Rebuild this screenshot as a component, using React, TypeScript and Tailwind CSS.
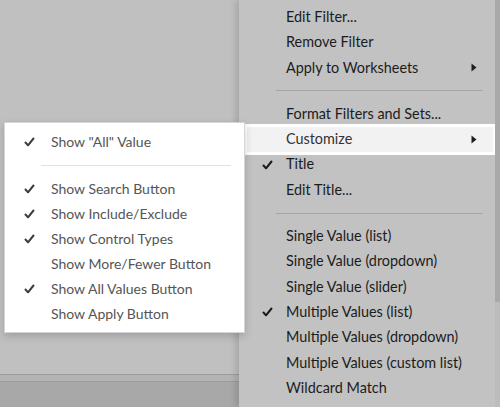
import React from "react";

const Check = ({ className = "" }: { className?: string }) => (
  <svg className={className} width="11" height="10" viewBox="0 0 11 10" fill="none" stroke="currentColor" strokeWidth="2" strokeLinecap="round" strokeLinejoin="round">
    <path d="M1.5 5.5 L4 8.3 L9.5 1.5" />
  </svg>
);

const Arrow = () => (
  <svg width="6" height="9" viewBox="0 0 6 9" className="text-[#1e1e1e]">
    <path d="M0.5 0.5 L5.5 4.5 L0.5 8.5 Z" fill="currentColor" />
  </svg>
);

type Item = { label: string; checked?: boolean; sub?: boolean; sep?: boolean; active?: boolean };

const mainItems: Item[] = [
  { label: "Edit Filter..." },
  { label: "Remove Filter" },
  { label: "Apply to Worksheets", sub: true },
  { label: "", sep: true },
  { label: "Format Filters and Sets..." },
  { label: "Customize", sub: true, active: true },
  { label: "Title", checked: true },
  { label: "Edit Title..." },
  { label: "", sep: true },
  { label: "Single Value (list)" },
  { label: "Single Value (dropdown)" },
  { label: "Single Value (slider)" },
  { label: "Multiple Values (list)", checked: true },
  { label: "Multiple Values (dropdown)" },
  { label: "Multiple Values (custom list)" },
  { label: "Wildcard Match" },
];

const subItems: Item[] = [
  { label: "Show \"All\" Value", checked: true },
  { label: "", sep: true },
  { label: "Show Search Button", checked: true },
  { label: "Show Include/Exclude", checked: true },
  { label: "Show Control Types", checked: true },
  { label: "Show More/Fewer Button" },
  { label: "Show All Values Button", checked: true },
  { label: "Show Apply Button" },
];

export default function App() {
  return (
    <div className="relative w-[500px] h-[407px] overflow-hidden bg-[#c0c0c0] flex font-['Lato','Open_Sans',sans-serif]">
      {/* dimmed workspace */}
      <div className="w-[239px] flex flex-col">
        <div className="flex-1" />
        <div className="h-px bg-[#9c9c9c]" />
        <div className="h-[6px] bg-[#b4b4b4]" />
        <div className="h-px bg-[#9c9c9c]" />
        <div className="h-[25px] bg-[#a8a8a8]" />
      </div>

      {/* main context menu (dimmed) */}
      <div className="flex-1 flex bg-[#c2c2c2] shadow-[-4px_0_6px_rgba(0,0,0,0.12)]">
        <div className="flex-1 pt-[4.5px] pl-2 pr-[2px]">
          {mainItems.map((it, i) =>
            it.sep ? (
              <div key={i} className="h-[21px] flex items-center pl-[29px] pr-[10px]">
                <div className="h-px w-full bg-[#a6a6a6]" />
              </div>
            ) : (
              <div
                key={i}
                className={`h-[25.3px] flex items-center text-[14.4px] text-[#1c1c1c] ${
                  it.active ? "bg-[#f2f2f2] ring-[3px] ring-white text-[#333]" : ""
                }`}
              >
                <div className="w-[39px] flex justify-center pl-[2px]">
                  {it.checked && <Check className="text-[#1a1a1a]" />}
                </div>
                <span className="flex-1 leading-none">{it.label}</span>
                {it.sub && (
                  <div className="w-[22px] flex justify-start">
                    <Arrow />
                  </div>
                )}
              </div>
            )
          )}
        </div>
        {/* scrollbar */}
        <div className="w-[5px] flex flex-col">
          <div className="h-[302px] bg-[#a9a9a9]" />
          <div className="flex-1 bg-[#bcbcbc]" />
        </div>
      </div>

      {/* submenu */}
      <div className="absolute left-[4px] top-[122px] w-[241px] bg-white border border-[#d6d6d6] shadow-[0_3px_8px_rgba(0,0,0,0.18)] pt-[6px] pb-[6px]">
        {subItems.map((it, i) =>
          it.sep ? (
            <div key={i} className="h-[22px] flex items-center pl-[36px] pr-[13px]">
              <div className="h-px w-full bg-[#e0e0e0]" />
            </div>
          ) : (
            <div key={i} className="h-[25px] flex items-center text-[14px] text-[#555]">
              <div className="w-[46px] flex justify-center pl-[2px]">
                {it.checked && <Check className="text-[#3c3c3c]" />}
              </div>
              <span className="leading-none">{it.label}</span>
            </div>
          )
        )}
      </div>
    </div>
  );
}
